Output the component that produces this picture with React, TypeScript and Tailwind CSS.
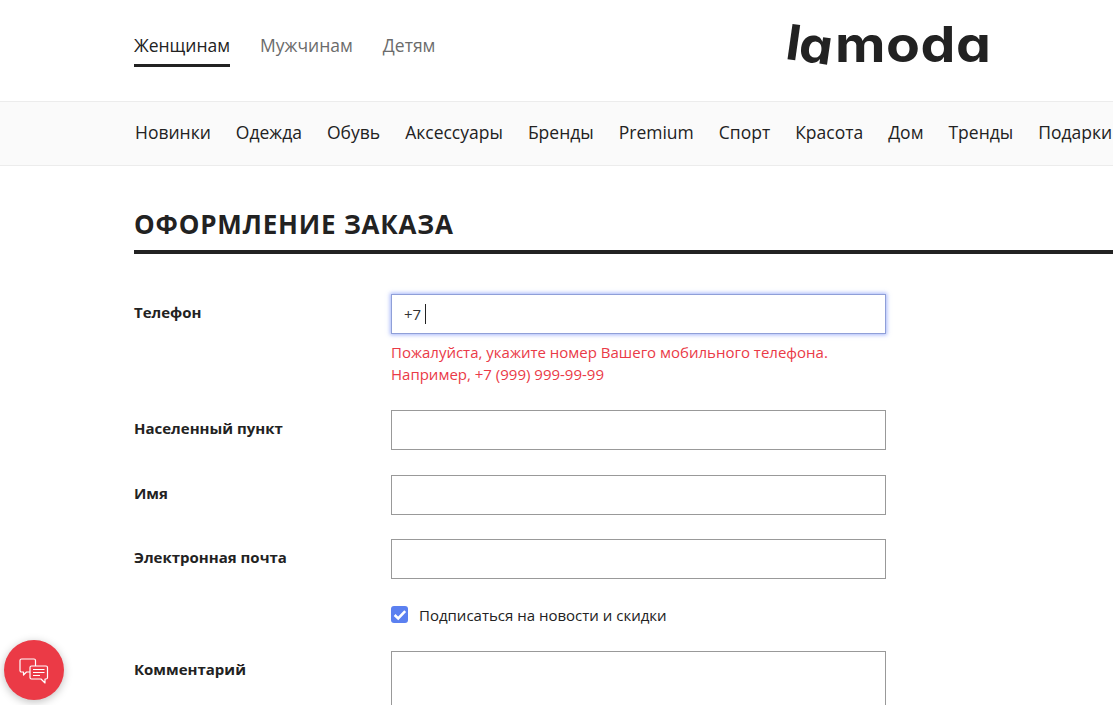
import React from "react";

const font = { fontFamily: '"Open Sans", sans-serif' };

function Field({ label, className = "", children }: { label: string; className?: string; children: React.ReactNode }) {
  return (
    <div className={`flex ${className}`}>
      <div className="w-[257px] shrink-0 pt-[9px] text-[15px] leading-[19px] font-bold text-[#222222]">{label}</div>
      <div className="w-[495px]">{children}</div>
    </div>
  );
}

const Input = () => <div className="h-10 w-[495px] border border-[#999999] bg-white" />;

const nav = ["Новинки", "Одежда", "Обувь", "Аксессуары", "Бренды", "Premium", "Спорт", "Красота", "Дом", "Тренды", "Подарки"];

export default function App() {
  return (
    <div className="relative h-[705px] w-[1113px] overflow-hidden bg-white text-[#222222]" style={font}>
      <header className="flex h-[101px] w-[992px] items-start justify-between pl-[134px]">
        <div className="flex gap-[30px] pt-[32px] text-[17.5px] leading-[26px]">
          <div className="h-[35px] border-b-[3px] border-[#222222] text-[#222222]">Женщинам</div>
          <div className="text-[#6b6b6b]">Мужчинам</div>
          <div className="text-[#6b6b6b]">Детям</div>
        </div>
        <div className="mt-[16px] flex items-baseline text-[49px] leading-[58px] font-bold text-[#222222] [font-family:Inter,sans-serif] [font-feature-settings:'cv11']">
          <span className="mr-[23px] inline-block origin-center rotate-[8deg] scale-x-[1.08] tracking-[-1px]">la</span>
          <span className="inline-block origin-right scale-x-[1.13] tracking-[0.5px]">moda</span>
        </div>
      </header>

      <nav className="flex h-[65px] items-center gap-[25px] whitespace-nowrap border-y border-[#ececec] bg-[#fafafa] pb-[2px] pl-[135px] text-[17.5px] text-[#222222]">
        {nav.map((n) => (
          <span key={n}>{n}</span>
        ))}
      </nav>

      <main className="pl-[134px]">
        <h1 className="mt-[40px] text-[26px] leading-[36px] font-bold tracking-[0.8px] text-[#222222]">ОФОРМЛЕНИЕ ЗАКАЗА</h1>
        <div className="mt-[8px] h-1 w-[979px] bg-[#222222]" />

        <Field label="Телефон" className="mt-[40px]">
          <div className="flex h-10 w-[495px] items-center border border-[#8f9fd8] bg-white pl-[12px] text-[15px] text-[#333333] shadow-[0_0_4px_1px_rgba(90,120,245,0.55)]">
            +7
            <span className="ml-[4px] h-[20px] w-px bg-[#222222]" />
          </div>
          <p className="mt-[7px] text-[15px] leading-[22px] text-[#ea3a47]">
            Пожалуйста, укажите номер Вашего мобильного телефона.
            <br />
            Например, +7 (999) 999-99-99
          </p>
        </Field>

        <Field label="Населенный пункт" className="mt-[25px]">
          <Input />
        </Field>
        <Field label="Имя" className="mt-[25px]">
          <Input />
        </Field>
        <Field label="Электронная почта" className="mt-[24px]">
          <Input />
        </Field>

        <div className="mt-[27px] ml-[257px] flex items-start gap-[11px]">
          <div className="flex h-[17px] w-[17px] items-center justify-center rounded-[3px] bg-[#5b80f0]">
            <svg width="14" height="12" viewBox="0 0 14 12" fill="none">
              <path d="M1.6 6 L5.2 9.4 L12.2 2.2" stroke="white" strokeWidth="2.6" />
            </svg>
          </div>
          <span className="text-[15px] leading-[19px] text-[#222222]">Подписаться на новости и скидки</span>
        </div>

        <Field label="Комментарий" className="mt-[26px]">
          <div className="h-[100px] w-[495px] border border-[#999999] bg-white" />
        </Field>
      </main>

      <div className="absolute left-[4px] top-[640px] flex h-[60px] w-[60px] items-center justify-center rounded-full bg-[#eb3a46] shadow-[0_2px_8px_rgba(0,0,0,0.25)]">
        <svg className="mt-[3px]" width="30" height="28" viewBox="0 0 30 28" fill="none" stroke="white" strokeWidth="1.2" strokeLinejoin="round">
          <path d="M2.5 1 H15 a1.5 1.5 0 0 1 1.5 1.5 V8 M11 14 H7.5 L4.5 17 V14 H2.5 a1.5 1.5 0 0 1 -1.5 -1.5 V2.5 A1.5 1.5 0 0 1 2.5 1" />
          <path d="M12.5 8 H27 a1.5 1.5 0 0 1 1.5 1.5 V19.5 a1.5 1.5 0 0 1 -1.5 1.5 H26 V25 L22 21 H12.5 a1.5 1.5 0 0 1 -1.5 -1.5 V9.5 A1.5 1.5 0 0 1 12.5 8 Z" />
          <path d="M14 11.5 H25.5 M14 14.5 H25.5 M14 17.5 H21" />
        </svg>
      </div>
    </div>
  );
}
